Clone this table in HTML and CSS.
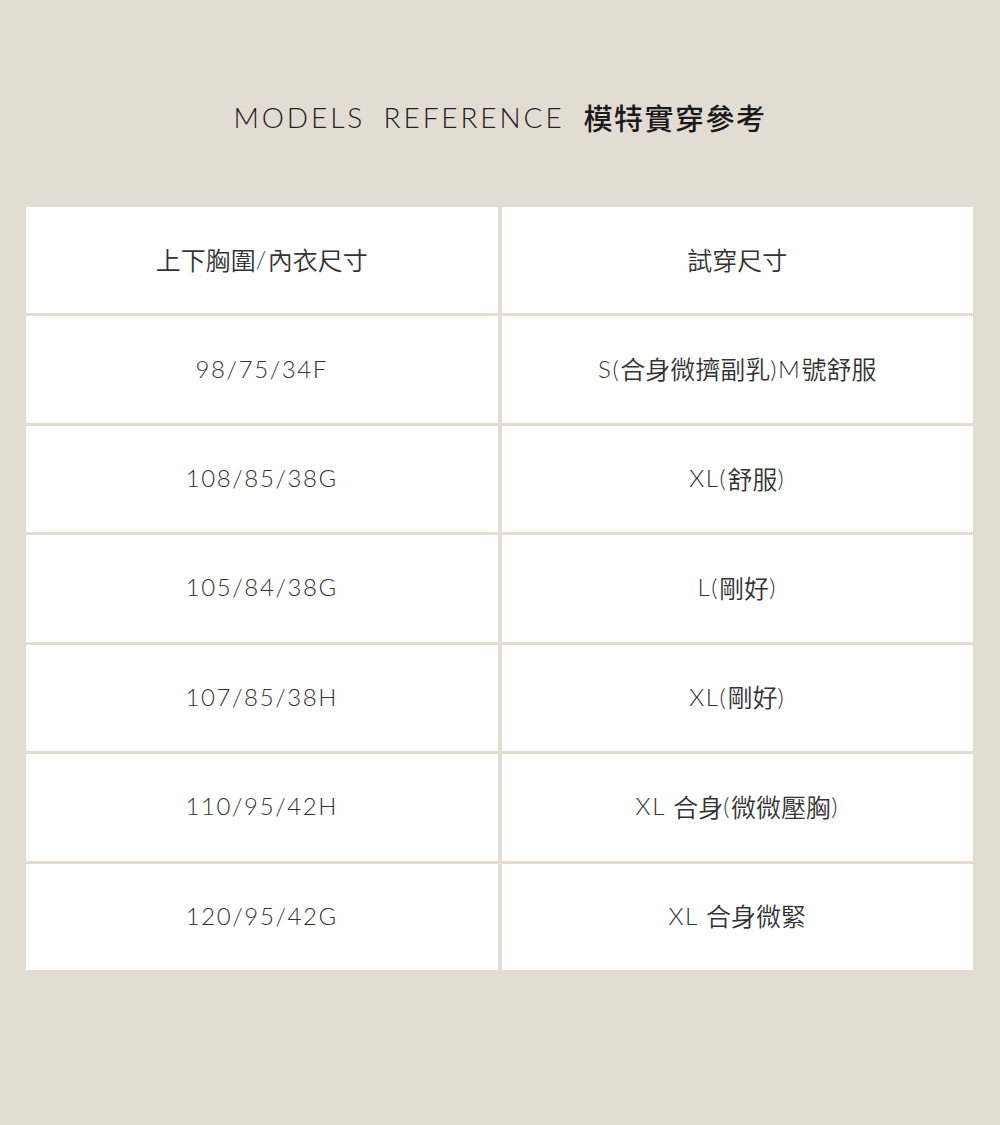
FILE: index.html
```html
<!DOCTYPE html>
<html lang="zh-Hant">
<head>
<meta charset="utf-8">
<title>Models Reference</title>
<link rel="stylesheet" href="styles.css">
</head>
<body>
<main class="page">
  <h1 class="title"><span class="title-en">MODELS REFERENCE</span><span class="title-zh">模特實穿參考</span></h1>
  <div class="table">
    <div class="cell">上下胸圍<span class="lat">/</span>內衣尺寸</div>
    <div class="cell">試穿尺寸</div>
    <div class="cell"><span class="lat">98/75/34F</span></div>
    <div class="cell"><span class="lat">S(</span>合身微擠副乳<span class="lat">)M</span>號舒服</div>
    <div class="cell"><span class="lat">108/85/38G</span></div>
    <div class="cell"><span class="lat">XL(</span>舒服<span class="lat">)</span></div>
    <div class="cell"><span class="lat">105/84/38G</span></div>
    <div class="cell"><span class="lat">L(</span>剛好<span class="lat">)</span></div>
    <div class="cell"><span class="lat">107/85/38H</span></div>
    <div class="cell"><span class="lat">XL(</span>剛好<span class="lat">)</span></div>
    <div class="cell"><span class="lat">110/95/42H</span></div>
    <div class="cell"><span class="lat">XL </span>合身<span class="lat">(</span>微微壓胸<span class="lat">)</span></div>
    <div class="cell"><span class="lat">120/95/42G</span></div>
    <div class="cell"><span class="lat">XL </span>合身微緊</div>
  </div>
</main>
</body>
</html>
```

FILE: styles.css
```css
html, body {
  margin: 0;
  padding: 0;
}
body {
  background: #e3dcd3;
  font-family: "Noto Sans CJK TC", "Noto Sans", sans-serif;
  color: #333;
}
.page {
  width: 1000px;
  height: 1125px;
  box-sizing: border-box;
  padding-top: 95px;
}
.title {
  margin: 0;
  height: 44px;
  display: flex;
  justify-content: center;
  align-items: center;
  font-weight: normal;
}
.title-en {
  font-family: "Lato", sans-serif;
  font-weight: 300;
  font-size: 28px;
  letter-spacing: 2.9px;
  word-spacing: 8px;
  color: #222;
  margin-right: 19px;
}
.title-zh {
  font-family: "Noto Sans CJK TC", sans-serif;
  font-weight: 500;
  font-size: 29px;
  letter-spacing: 1.5px;
  color: #1a1a1a;
}
.table {
  margin: 68px 0 0 26px;
  width: 947px;
  height: 763px;
  display: grid;
  grid-template-columns: 1fr 1fr;
  grid-template-rows: repeat(7, 1fr);
  column-gap: 4px;
  row-gap: 3px;
}
.cell {
  background: #fff;
  display: flex;
  justify-content: center;
  align-items: center;
  padding-bottom: 3px;
  font-size: 25px;
  font-weight: 350;
  color: #333;
  white-space: pre;
}
.lat {
  font-family: "Lato", sans-serif;
  font-weight: 300;
  font-size: 24px;
  letter-spacing: 1.6px;
  color: #333;
}
```
